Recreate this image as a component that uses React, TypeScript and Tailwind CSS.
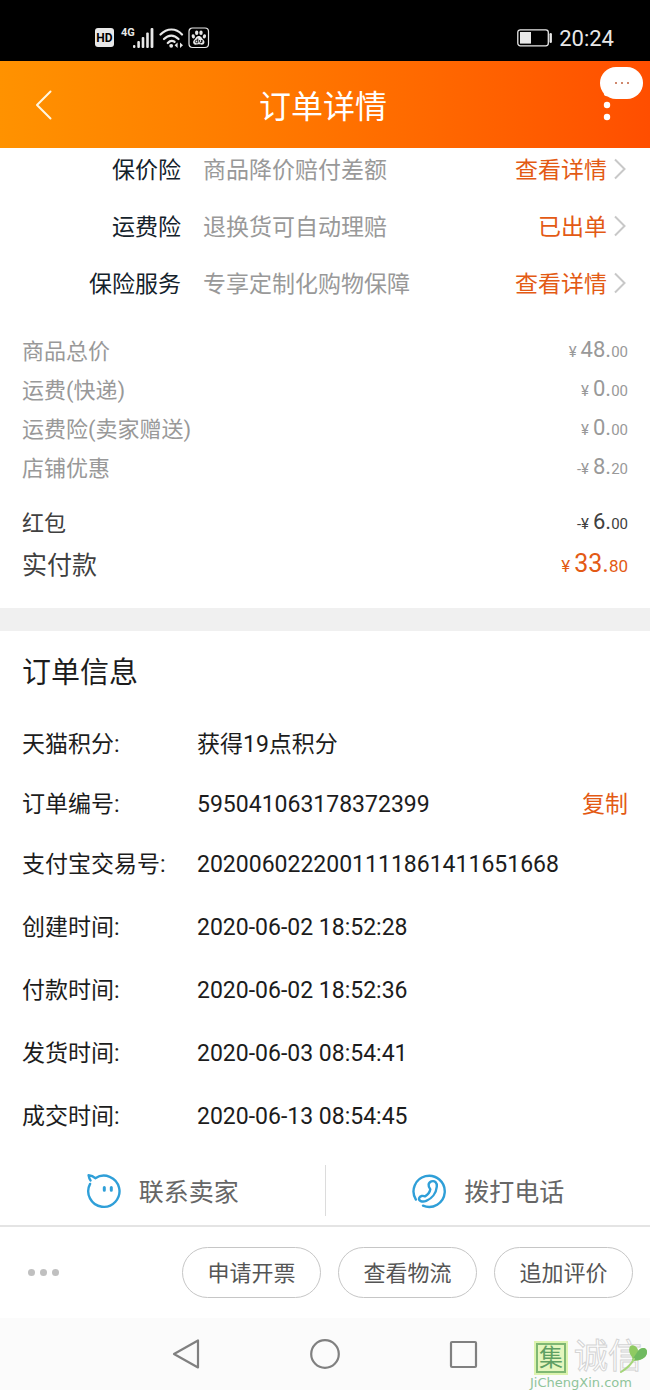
import React from "react";

type Insurance = { label: string; desc: string; action: string };
type Fee = { label: string; sign?: string; whole: string; cents: string };
type Info = { label: string; value: string; copy?: boolean };

const insurances: Insurance[] = [
  { label: "保价险", desc: "商品降价赔付差额", action: "查看详情" },
  { label: "运费险", desc: "退换货可自动理赔", action: "已出单" },
  { label: "保险服务", desc: "专享定制化购物保障", action: "查看详情" },
];

const fees: Fee[] = [
  { label: "商品总价", whole: "48.", cents: "00" },
  { label: "运费(快递)", whole: "0.", cents: "00" },
  { label: "运费险(卖家赠送)", whole: "0.", cents: "00" },
  { label: "店铺优惠", sign: "-", whole: "8.", cents: "20" },
];

const orderInfo: Info[] = [
  { label: "天猫积分:", value: "获得19点积分" },
  { label: "订单编号:", value: "595041063178372399", copy: true },
  { label: "支付宝交易号:", value: "2020060222001111861411651668" },
];

const orderTimes: Info[] = [
  { label: "创建时间:", value: "2020-06-02 18:52:28" },
  { label: "付款时间:", value: "2020-06-02 18:52:36" },
  { label: "发货时间:", value: "2020-06-03 08:54:41" },
  { label: "成交时间:", value: "2020-06-13 08:54:45" },
];

const actions = ["申请开票", "查看物流", "追加评价"];

const StatusBar = () => (
  <div className="flex h-[61px] items-center justify-between bg-black pt-3.5 pl-[95px] pr-9 text-[#e8e8e8]">
    <div className="flex items-center">
      <span className="flex h-[19px] w-[19px] items-center justify-center rounded-[3px] bg-[#e8e8e8] text-[12px] font-bold leading-none text-black">
        HD
      </span>
      <span className="ml-[7px] mb-[11px] text-[11px] font-bold leading-none">4G</span>
      <svg className="-ml-0.5" width="22" height="22" viewBox="0 0 22 22" fill="currentColor">
        <rect x="0" y="18" width="2.4" height="3" rx="1" />
        <rect x="4.3" y="14" width="2.6" height="7" rx="1" />
        <rect x="8.7" y="10" width="2.6" height="11" rx="1" />
        <rect x="13.2" y="5.5" width="2.6" height="15.5" rx="1" />
        <rect x="17.6" y="1" width="2.8" height="20" rx="1" />
      </svg>
      <svg className="ml-1" width="25" height="22" viewBox="0 0 25 22" fill="none" stroke="currentColor" strokeWidth="2.2" strokeLinecap="round">
        <path d="M1.5 7.5C8 .8 17 .8 23 7.5M5 12c4.5-4.6 10-4.6 14.5 0M8.8 16c2-2.2 4.5-2.6 6.7-1.2" />
        <circle cx="12.2" cy="18.8" r="1.9" fill="currentColor" stroke="none" />
        <path d="M18.6 15.6V21l-3-2.7ZM21 15.6V21l3-2.7Z" fill="currentColor" stroke="none" />
      </svg>
      <svg className="ml-1" width="22" height="22" viewBox="0 0 22 22" fill="none">
        <rect x="1" y="1" width="19.5" height="19.5" rx="3.5" stroke="currentColor" strokeWidth="1.2" />
        <g fill="currentColor">
          <ellipse cx="5.3" cy="9.4" rx="1.6" ry="2.1" transform="rotate(-15 5.3 9.4)" />
          <ellipse cx="8.7" cy="5.7" rx="1.7" ry="2.3" />
          <ellipse cx="13" cy="5.7" rx="1.7" ry="2.3" />
          <ellipse cx="16.4" cy="9.4" rx="1.6" ry="2.1" transform="rotate(15 16.4 9.4)" />
          <path d="M10.8 8.9c2.6 0 2.8 2.4 4.5 3.8 2 1.7 1.3 5-1.4 5-1.4 0-2-.4-3.1-.4s-1.7.4-3.1.4c-2.7 0-3.4-3.3-1.4-5 1.7-1.4 1.9-3.8 4.5-3.8Z" />
        </g>
        <path d="M9.8 11.5v4.3H8.6a1.3 1.3 0 0 1 0-2.6h1.2M11.6 13v1.8c0 1.2 2.2 1.2 2.2 0V13v2.9" stroke="#000" strokeWidth=".9" />
      </svg>
    </div>
    <div className="flex items-center gap-[7px]">
      <svg width="35" height="18" viewBox="0 0 35 18" fill="none">
        <rect x=".8" y=".8" width="30.5" height="16" rx="2.5" stroke="currentColor" strokeWidth="1.3" />
        <rect x="3" y="3" width="11" height="11.6" fill="currentColor" />
        <rect x="32.5" y="4" width="2.4" height="10" rx="1.2" fill="currentColor" />
      </svg>
      <time className="pt-0.5 text-[22px] leading-6">20:24</time>
    </div>
  </div>
);

const TitleBar = () => (
  <header className="relative flex h-[87px] items-center justify-between bg-linear-to-r from-[#ff9200] to-[#ff4e00] pl-8 pr-9 text-white">
    <button aria-label="返回" className="flex h-10 w-10 items-center">
      <svg width="22" height="32" viewBox="0 0 22 32" fill="none" stroke="#fff6e0" strokeWidth="2" strokeLinecap="round" strokeLinejoin="round">
        <path d="M18.5 2.5 5 16l13.5 13.5" />
      </svg>
    </button>
    <h1 className="pt-1 text-[32px] leading-10">订单详情</h1>
    <button aria-label="更多" className="flex h-10 w-10 items-center justify-end">
      <svg width="14" height="34" viewBox="0 0 14 34" fill="currentColor">
        <circle cx="7" cy="5" r="3.2" />
        <circle cx="7" cy="17" r="3.2" />
        <circle cx="7" cy="29" r="3.2" />
      </svg>
    </button>
    <span className="absolute right-[7px] top-1.5 flex h-8 w-[43px] items-center justify-center gap-1 rounded-full bg-white">
      <i className="h-0.5 w-0.5 rounded-full bg-[#c0603c]" />
      <i className="h-0.5 w-0.5 rounded-full bg-[#c0603c]" />
      <i className="h-0.5 w-0.5 rounded-full bg-[#c0603c]" />
    </span>
  </header>
);

const Price = ({ sign, whole, cents }: Omit<Fee, "label">) => (
  <dd className="flex h-[30px] items-baseline text-[15px]">
    {sign}
    <span className="mr-1">¥</span>
    <span className="text-[22px] leading-none">{whole}</span>
    {cents}
  </dd>
);

const InfoRow = ({ label, value, copy }: Info) => (
  <div className="flex items-center text-[23px] leading-8 text-[#1c1c1c]">
    <dt className="w-[175px] shrink-0">{label}</dt>
    <dd className="flex-1">{value}</dd>
    {copy && (
      <dd>
        <button className="text-[#e35a14]">复制</button>
      </dd>
    )}
  </div>
);

const SellerIcon = () => (
  <svg width="36" height="36" viewBox="0 0 36 36" fill="none" stroke="#2f9fd8" strokeWidth="2.4" strokeLinecap="round" strokeLinejoin="round">
    <path d="M4.1 10.9A15.6 15.6 0 1 0 9.3 5.2C7.6 3.5 5.3 2.4 2.6 2.2c.3 1.9.9 3.7 1.9 5.2" />
    <path d="M18.3 14.6v2.6M25.3 14.6v2.6" strokeWidth="3" />
  </svg>
);

const PhoneIcon = () => (
  <svg width="36" height="36" viewBox="0 0 36 36" fill="none" stroke="#2f9fd8" strokeWidth="2.4" strokeLinecap="round" strokeLinejoin="round">
    <path d="M4.9 26.6A15.6 15.6 0 1 1 12 32.7" />
    <path d="M19.3 16.3C16.8 13.4 17 9.6 20.3 8.4c3.6-1.2 5.9 1.4 5.5 5.2-.6 6.6-5 12-10.6 14.3-4.3 1.7-8-.3-7-3 .8-2 3.8-2.6 5.8-1.5 2.5-1.5 4.8-4 5.3-7.1Z" />
  </svg>
);

const Watermark = () => (
  <div className="absolute bottom-0 right-0 w-[120px] text-[#8fc49a]">
    <div className="flex items-center gap-1.5 pl-1">
      <span className="flex h-[34px] w-[34px] items-center justify-center border-2 border-[#dcf3ae] bg-[#e4f6bd]">
        <span className="flex h-[30px] w-[30px] items-center justify-center border-2 border-[#7fb873] text-[24px] leading-none text-[#5f9f63]">
          集
        </span>
      </span>
      <span className="whitespace-nowrap pb-1 text-[34px] leading-[30px] text-white [-webkit-text-stroke:1px_#d4d4d4]">诚信</span>
    </div>
    <svg className="absolute right-0 top-0" width="30" height="34" viewBox="0 0 30 34">
      <path d="M12 16C7 10 9 2 15 5c2 1 3 3 3 5 3-4 9-4 9 1 0 6-7 9-14 9Z" fill="#8fca62" />
      <path d="M12 19 18 10c3-4 9-4 9 1 0 6-7 9-15 8Z" fill="#6fb95f" />
      <path d="M14 18C11 24 6 28 1 31" fill="none" stroke="#a5d67a" strokeWidth="2" strokeLinecap="round" />
    </svg>
    <p className="font-['DejaVu_Sans'] text-[13px] leading-[15px]">JiChengXin.com</p>
  </div>
);

const App = () => {
  return (
    <div
      lang="zh-CN"
      className="flex min-h-screen flex-col bg-white font-[Roboto,'Noto_Sans_CJK_SC',sans-serif]"
    >
      <StatusBar />
      <TitleBar />

      <main className="flex-1">
        <ul className="flex flex-col gap-[25px] pt-[7px] pr-6 text-[23px] leading-8">
          {insurances.map((item) => (
            <li key={item.label} className="flex items-center">
              <span className="w-[181px] text-right text-[#14222b]">{item.label}</span>
              <span className="ml-[22px] flex-1 text-[#999]">{item.desc}</span>
              <a href="#" className="flex items-center gap-1.5 text-[#e35a14]">
                {item.action}
                <svg className="mb-1" width="13" height="22" viewBox="0 0 13 22" fill="none" stroke="#c8c8c8" strokeWidth="2">
                  <path d="m2 1.5 9.5 9.5L2 20.5" />
                </svg>
              </a>
            </li>
          ))}
        </ul>

        <dl className="px-[22px] pt-9 pb-[27px] text-[22px] leading-[30px]">
          <div className="flex flex-col gap-[9px] text-[#999]">
            {fees.map(({ label, ...price }) => (
              <div key={label} className="flex justify-between">
                <dt>{label}</dt>
                <Price {...price} />
              </div>
            ))}
          </div>
          <div className="mt-[25px] flex justify-between text-[#404040]">
            <dt>红包</dt>
            <Price sign="-" whole="6." cents="00" />
          </div>
          <div className="mt-3 flex justify-between text-[25px] text-[#404040]">
            <dt>实付款</dt>
            <dd className="flex h-[30px] items-baseline text-[17px] text-[#e35a14]">
              <span className="mr-1">¥</span>
              <span className="text-[25px] leading-none">33.</span>80
            </dd>
          </div>
        </dl>

        <div className="h-[23px] bg-[#f0f0f0]" />

        <section className="px-[22px] pt-[22px] pb-[22px]">
          <h2 className="text-[29px] leading-10 text-[#1c1c1c]">订单信息</h2>
          <dl className="mt-9 flex flex-col gap-7">
            {orderInfo.map((row) => (
              <InfoRow key={row.label} {...row} />
            ))}
          </dl>
          <dl className="mt-[31px] flex flex-col gap-[31px]">
            {orderTimes.map((row) => (
              <InfoRow key={row.label} {...row} />
            ))}
          </dl>
        </section>

        <div className="flex items-center border-b-2 border-[#e4e4e4] pt-[10px] pb-[9px] text-[25px] text-[#666]">
          <button className="flex h-[51px] flex-1 items-center justify-center gap-[17px] border-r border-[#dcdcdc]">
            <SellerIcon />
            <span className="pt-1">联系卖家</span>
          </button>
          <button className="flex h-[51px] flex-1 items-center justify-center gap-[17px]">
            <PhoneIcon />
            <span className="pt-1">拨打电话</span>
          </button>
        </div>
      </main>

      <div className="flex items-center justify-between pt-5 pb-5 pl-7 pr-[17px]">
        <button aria-label="更多操作" className="flex h-10 items-center gap-[5px]">
          <i className="h-[7px] w-[7px] rounded-full bg-[#c0c0c0]" />
          <i className="h-[7px] w-[7px] rounded-full bg-[#c0c0c0]" />
          <i className="h-[7px] w-[7px] rounded-full bg-[#c0c0c0]" />
        </button>
        <div className="flex gap-[17px]">
          {actions.map((text) => (
            <button key={text} className="h-[51px] w-[139px] rounded-full border border-[#c6c6c6] pt-0.5 text-[22px] text-[#555]">
              {text}
            </button>
          ))}
        </div>
      </div>

      <nav className="relative flex h-[72px] items-center justify-center gap-[107px] bg-[#fbfbfb]">
        <button aria-label="后退">
          <svg width="32" height="32" viewBox="0 0 32 32" fill="none" stroke="#808080" strokeWidth="2.2" strokeLinejoin="round">
            <path d="M28 2.5v27L4 16Z" />
          </svg>
        </button>
        <button aria-label="主屏幕">
          <svg width="32" height="32" viewBox="0 0 32 32" fill="none" stroke="#808080" strokeWidth="2.2">
            <circle cx="16" cy="16" r="13.8" />
          </svg>
        </button>
        <button aria-label="最近任务">
          <svg width="32" height="32" viewBox="0 0 32 32" fill="none" stroke="#808080" strokeWidth="2.2">
            <rect x="3" y="4" width="25" height="25" rx="1" />
          </svg>
        </button>
        <Watermark />
      </nav>
    </div>
  );
};

export default App;
